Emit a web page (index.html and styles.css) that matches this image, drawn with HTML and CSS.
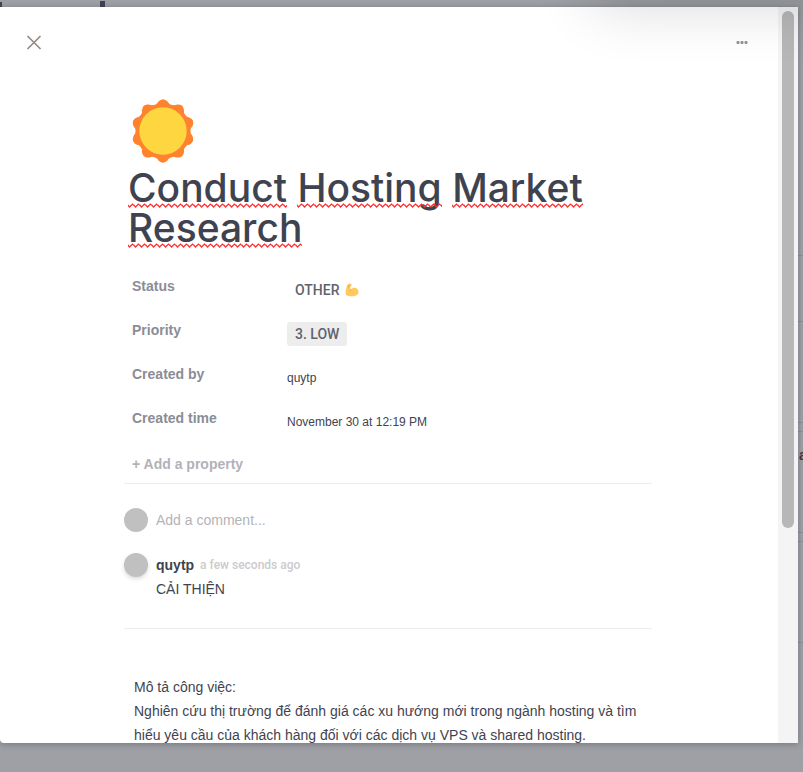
FILE: index.html
```html
<!DOCTYPE html>
<html lang="vi">
<head>
<meta charset="utf-8">
<meta name="viewport" content="width=device-width, initial-scale=1">
<title>Conduct Hosting Market Research</title>
<link rel="stylesheet" href="styles.css">
</head>
<body>
<div class="backdrop" aria-hidden="true">
  <i class="mark mark-corner"></i>
  <i class="mark mark-stem"></i>
  <i class="rule rule-1"></i>
  <i class="rule rule-2"></i>
  <i class="rule rule-3"></i>
  <i class="rule rule-4"></i>
  <i class="rule rule-5"></i>
  <i class="rule rule-6"></i>
  <i class="rule rule-7"></i>
  <b class="peek">a</b>
</div>
<main class="dialog" role="dialog" aria-labelledby="title">
  <div class="page">
    <header class="toolbar">
      <button class="icon-button" type="button" aria-label="Close">
        <svg width="16" height="16" viewBox="0 0 16 16"><path d="M1.500 1l13 13M14.500 1l-13 13" fill="none" stroke="#958b85" stroke-width="1.700"/></svg>
      </button>
      <button class="icon-button" type="button" aria-label="More">
        <svg width="12" height="4" viewBox="0 0 12 4" fill="#99928f"><rect x=".5" y="0" width="3" height="3" rx="1"/><rect x="4.500" y="0" width="3" height="3" rx="1"/><rect x="8.500" y="0" width="3" height="3" rx="1"/></svg>
      </button>
    </header>
    <article class="card">
      <svg class="sun" width="64" height="64" viewBox="-32 -32 64 64" aria-hidden="true">
        <g fill="#ff832e">
          <path d="M-3.900-29.200Q0-34 3.900-29.200Q7.700-24.800 14-25.900Q20-27.500 20.300-21.300Q21-15.300 26.500-12.700Q32.300-10.500 28.900-5.400Q26 0 28.900 5.400Q32.300 10.500 26.500 12.700Q21 15.300 20.300 21.300Q20 27.500 14 25.900Q7.700 24.800 3.900 29.200Q0 34-3.900 29.200Q-7.700 24.800-14 25.900Q-20 27.500-20.300 21.300Q-21 15.300-26.500 12.700Q-32.300 10.500-28.900 5.400Q-26 0-28.900-5.400Q-32.300-10.500-26.500-12.700Q-21-15.300-20.300-21.300Q-20-27.500-14-25.900Q-7.700-24.800-3.900-29.200Z"/>
          <circle cy="-25" r="6.400"/>
          <circle cx="14.700" cy="-20.200" r="6.400"/>
          <circle cx="23.800" cy="-7.700" r="6.400"/>
          <circle cx="23.800" cy="7.700" r="6.400"/>
          <circle cx="14.700" cy="20.200" r="6.400"/>
          <circle cy="25" r="6.400"/>
          <circle cx="-14.700" cy="20.200" r="6.400"/>
          <circle cx="-23.800" cy="7.700" r="6.400"/>
          <circle cx="-23.800" cy="-7.700" r="6.400"/>
          <circle cx="-14.700" cy="-20.200" r="6.400"/>
        </g>
        <circle r="23.700" fill="#fed640"/>
      </svg>
      <h1 class="title" id="title"><span class="word">Conduct</span> <span class="word">Hosting</span> <span class="word">Market</span> <span class="word">Research</span></h1>
      <dl class="properties">
        <dt>Status</dt>
        <dd><button class="chip" type="button">OTHER
          <svg width="14" height="14" viewBox="0 0 14 14" aria-hidden="true"><path fill="#ffc95c" d="M3.200.9C4.200.2 5.600.3 6.200 1c.6.700.6 1.600-.1 2.200l-1.200.5c.2 1 .6 2 1.100 2.800C7 5.200 8.500 4.500 10 4.800c2.200.3 3.600 2 3.500 4.300-.1 2.600-2.200 4-5.300 4.100-2.600.1-5.300-.1-6.700-.9-.8-.5-1-1.600-.9-3C.8 6.300 1.700 2.200 3.200.9z"/><path fill="none" stroke="#e9a23f" stroke-width=".7" stroke-linecap="round" d="M3.200 3.800l1.600-.1M5.900 6.600c-.5.500-.7 1-.7 1.700M2.800 2.600l.8.300"/></svg>
        </button></dd>
        <dt>Priority</dt>
        <dd><button class="chip chip-filled" type="button">3. LOW</button></dd>
        <dt>Created by</dt>
        <dd>quytp</dd>
        <dt>Created time</dt>
        <dd>November 30 at 12:19 PM</dd>
      </dl>
      <button class="add-property" type="button">+ Add a property</button>
      <section class="comments">
        <label class="comment">
          <span class="avatar"></span>
          <input class="comment-input" type="text" placeholder="Add a comment..." aria-label="Add a comment">
        </label>
        <div class="comment">
          <span class="avatar avatar-raised"></span>
          <div class="comment-body">
            <p class="byline"><strong>quytp</strong><time>a few seconds ago</time></p>
            <p>CẢI THIỆN</p>
          </div>
        </div>
      </section>
      <section class="description">
        <p>Mô tả công việc:</p>
        <p>Nghiên cứu thị trường để đánh giá các xu hướng mới trong ngành hosting và tìm hiểu yêu cầu của khách hàng đối với các dịch vụ VPS và shared hosting.</p>
      </section>
    </article>
  </div>
  <div class="track" aria-hidden="true"><div class="thumb"></div></div>
</main>
<div class="glow" aria-hidden="true"></div>
</body>
</html>
```
FILE: styles.css
```css
* { box-sizing: border-box; }

body {
  margin: 0;
  height: 100vh;
  overflow: hidden;
  position: relative;
  padding: 7px 5px 29px 0;
  background: #9fa0a5;
  color: #3f4350;
  font: 14px/24px "Liberation Sans", Arial, sans-serif;
}

h1, dl, dd, p { margin: 0; }

button {
  border: 0;
  padding: 0;
  background: none;
  color: inherit;
  font: inherit;
  cursor: pointer;
}

/* Slivers of the board behind the dialog */
.backdrop { position: absolute; inset: 0; overflow: hidden; }
.mark { position: absolute; background: #3f4354; }
.mark-corner { left: 0; top: 2px; width: 2px; height: 6px; }
.mark-stem { left: 100px; top: 1px; width: 5px; height: 6px; }
.rule { position: absolute; right: 0; width: 5px; height: 1px; background: #8d8e96; }
.rule-1 { top: 255px; }
.rule-2 { top: 321px; }
.rule-3 { top: 422px; }
.rule-4 { top: 431px; }
.rule-5 { top: 532px; }
.rule-6 { top: 541px; }
.rule-7 { top: 642px; }
.peek { position: absolute; left: 799px; top: 443px; color: #4a2f3c; }

.dialog {
  position: relative;
  display: flex;
  height: 100%;
  overflow: hidden;
  background: #fff;
  border-radius: 0 0 0 4px;
  box-shadow: 0 1px 6px rgba(40, 44, 60, .35);
}

.page { flex: 1; min-width: 0; }

.toolbar {
  display: flex;
  justify-content: space-between;
  padding: 24px 24px 0;
}

.icon-button {
  display: grid;
  place-items: center;
  width: 24px;
  height: 24px;
}
.toolbar .icon-button:first-child { margin-left: -2px; }

.card { padding: 44px 126px 0 124px; }

.sun { display: block; margin: 0 0 5px 7px; }

.title {
  padding-left: 4px;
  font: 500 39px/40px Inter, "Open Sans", sans-serif;
}
.word { position: relative; display: inline-block; }
.word::after {
  content: "";
  position: absolute;
  left: 0;
  right: 0;
  bottom: 0;
  height: 5px;
  background: url("data:image/svg+xml,%3Csvg xmlns='http://www.w3.org/2000/svg' width='6' height='5'%3E%3Cpath d='M-1.500 .5L1.500 4L4.500 1L7.500 4' fill='none' stroke='%23ff2a2a' stroke-width='1.200'/%3E%3C/svg%3E") repeat-x;
}

.properties {
  display: grid;
  grid-template-columns: 155px 1fr;
  row-gap: 20px;
  margin-top: 30px;
  padding-left: 8px;
}
.properties dt { color: #8b8c95; font-weight: bold; line-height: 16px; }
.properties dd { height: 24px; font-size: 12px; }

.chip {
  display: flex;
  align-items: center;
  gap: 5px;
  height: 24px;
  padding: 0 8px;
  border-radius: 3px;
  color: #60626e;
  font: 500 14px/24px Roboto, sans-serif;
}
.chip-filled { background: #ededed; }

.add-property {
  display: block;
  margin: 18px 0 0 8px;
  color: #b1b2b8;
  font-weight: bold;
}

.comments {
  display: grid;
  gap: 21px;
  margin-top: 7px;
  padding: 24px 0 27px;
  border-top: 1px solid #ececec;
  border-bottom: 1px solid #ececec;
}
.comment { display: flex; gap: 8px; }
.avatar {
  flex: none;
  width: 24px;
  height: 24px;
  border-radius: 50%;
  background: #c0c0c0;
}
.avatar-raised { box-shadow: 0 2px 4px rgba(0, 0, 0, .15); }
.comment-input {
  flex: 1;
  min-width: 0;
  height: 24px;
  padding: 0;
  border: 0;
  outline: 0;
  background: none;
  color: inherit;
  font: inherit;
}
.comment-input::placeholder { color: #b3b3b8; opacity: 1; }
.byline { display: flex; gap: 6px; }
.byline time { color: #cbcbcd; font: 500 12px/24px Roboto, sans-serif; }

.description { padding: 46px 10px 0; }

.track {
  flex: none;
  width: 20px;
  padding: 4px;
  background: #f4f4f4;
}
.thumb {
  width: 12px;
  height: 71%;
  border-radius: 6px;
  background: #b7b7b7;
}

/* Soft shadow of a panel sitting above the window */
.glow {
  position: absolute;
  right: -60px;
  top: -100px;
  width: 270px;
  height: 100px;
  border-radius: 8px;
  box-shadow: 0 6px 60px rgba(0, 0, 0, .16);
  pointer-events: none;
}
```
